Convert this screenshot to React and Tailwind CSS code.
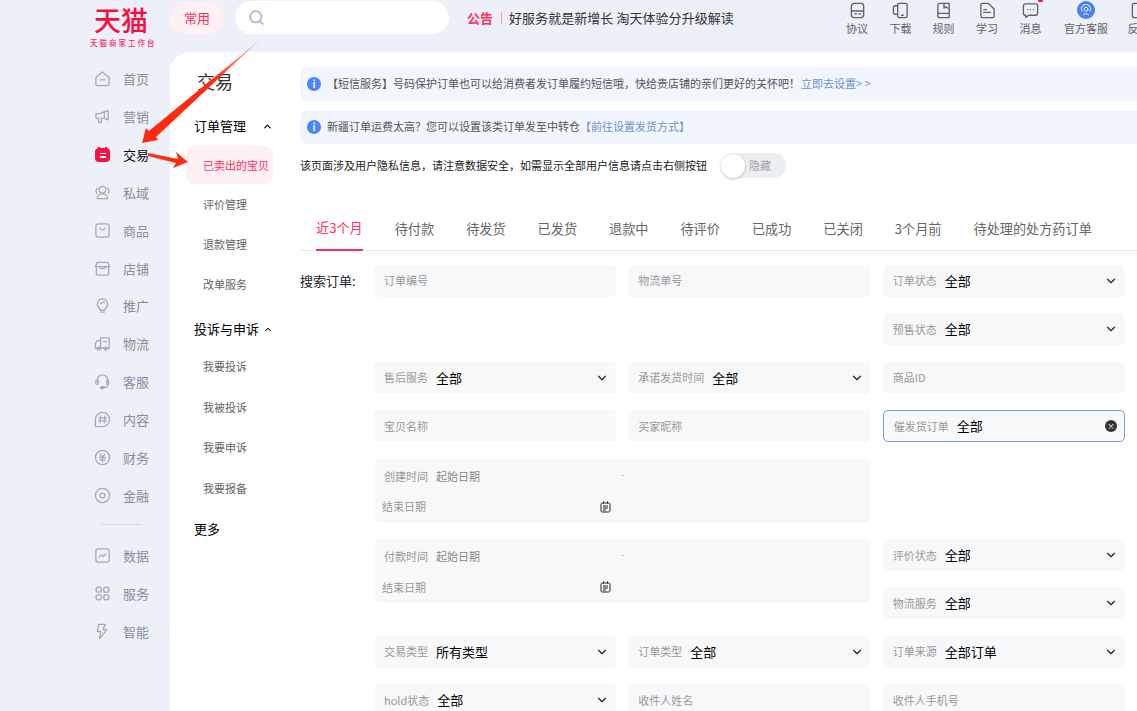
import React from 'react'
import { ChevronDown, ChevronUp, Search } from 'lucide-react'

const Ico = ({ children, size = 18, className = '' }) => (
  <svg width={size} height={size} viewBox="0 0 18 18" fill="none" stroke="currentColor" strokeWidth="1.4" strokeLinecap="round" strokeLinejoin="round" className={className}>
    {children}
  </svg>
)

const navTop = [
  { name: '首页', icon: <><path d="M2 8l7-6 7 6v7a1.5 1.5 0 0 1-1.5 1.5h-11A1.5 1.5 0 0 1 2 15z" /><path d="M6.5 10.5h5" /></> },
  { name: '营销', icon: <><path d="M2 6h4l9-3.500v10L11 11H7.500l.5 4.500H5L4.500 11H3.500A1.500 1.500 0 0 1 2 9.500z" /><path d="M11 4v7" /></> },
  { name: '交易', active: true },
  { name: '私域', icon: <><circle cx="9" cy="6" r="3.500" /><path d="M3.500 15.500c0-3 2.500-5 5.500-5s5.500 2 5.500 5z" /><path d="M3.500 4.500C2 6 2 8.500 3 10M14.500 4.500C16 6 16 8.500 15 10" /></> },
  { name: '商品', icon: <><rect x="2" y="2" width="14" height="14" rx="2.500" /><path d="M6.500 6.500c.5 2.500 4.500 2.500 5 0" /></> },
  { name: '店铺', icon: <><path d="M3.500 2.500h11l2 4.500H1.500z" /><path d="M2.500 7v7a2 2 0 0 0 2 2h9a2 2 0 0 0 2-2V7" /><path d="M6 8c1 1.500 5 1.500 6 0" /></> },
  { name: '推广', icon: <><path d="M9 2a5.500 5.500 0 0 0-3 10l.5 2h5l.5-2A5.500 5.500 0 0 0 9 2z" /><path d="M7 16h4" /><path d="M7 7l4-2" /></> },
  { name: '物流', icon: <><path d="M7 3h9v11H7z" /><path d="M7 6H3.500L1.500 9v5H7" /><circle cx="5" cy="14.500" r="1.500" /><circle cx="12.500" cy="14.500" r="1.500" /><path d="M10 7h3.500" /></> },
  { name: '客服', icon: <><path d="M3.500 9V7.500a5.500 5.500 0 0 1 11 0V9" /><rect x="2" y="7.500" width="2.500" height="4.500" rx="1" /><rect x="13.500" y="7.500" width="2" height="4.500" rx="1" /><path d="M14.500 12c0 2-2 3.500-4.500 3.500" /><rect x="7" y="14.500" width="3.500" height="2" rx="1" fill="currentColor" /></> },
  { name: '内容', icon: <><path d="M9 1.500a7.500 7.500 0 1 1 0 15H1.500V9A7.500 7.500 0 0 1 9 1.500z" /><path d="M7 5.500l-.5 7M11.500 5.500l-.5 7M5 7.500h8M5 10.500h8" /></> },
  { name: '财务', icon: <><circle cx="9" cy="9" r="7.500" /><path d="M6.500 5.500L9 8.500l2.500-3M6 9h6M6 11.500h6M9 8.500V14" /></> },
  { name: '金融', icon: <><circle cx="9" cy="9" r="7.500" /><circle cx="9" cy="9" r="2.500" /></> },
]

const navBottom = [
  { name: '数据', icon: <><rect x="2" y="2" width="14" height="14" rx="2.500" /><path d="M5.500 10.500l2.500-2 2 1.500 2.500-2.500" /></> },
  { name: '服务', icon: <><circle cx="5" cy="5" r="2.800" /><circle cx="13" cy="5" r="2.800" /><circle cx="5" cy="13" r="2.800" /><circle cx="13" cy="13" r="2.800" /></> },
  { name: '智能', icon: <><path d="M9 1.500H5L3.500 9H7l-1 7.500L13.500 7H9.500l2.500-5.500z" /></> },
]

function NavItem({ item }) {
  return (
    <div className={`flex items-center h-[37.850px] pl-[11px] ${item.active ? 'text-black' : 'text-[#878ea3]'}`}>
      <div className="w-[17px] h-[17px] flex items-center justify-center text-[#a5abbe]">
        {item.active ? (
          <div className="relative w-[15px] h-[14px] mt-[1px] rounded-[4px] bg-[#ff0f3f] flex flex-col items-center justify-center gap-[2px]">
            <div className="absolute top-[-1.500px] left-[3px] w-[2px] h-[3px] bg-[#ff0f3f]" />
            <div className="absolute top-[-1.500px] right-[3px] w-[2px] h-[3px] bg-[#ff0f3f]" />
            <div className="w-[6px] h-[1.500px] bg-white" />
            <div className="w-[6px] h-[1.500px] bg-white" />
          </div>
        ) : (
          <Ico size={17}>{item.icon}</Ico>
        )}
      </div>
      <span className="ml-[12px] text-[13px] leading-none">{item.name}</span>
    </div>
  )
}

function SubItem({ label, active, h = 'h-[40.500px]' }) {
  return (
    <div className={`flex items-center pl-[17px] ${h} text-[11px] ${active ? 'bg-[#fff0f3] rounded-lg text-[#ff2d5c]' : 'text-[#666]'}`}>
      {label}
    </div>
  )
}

function TopIcon({ label, w, children, badge }) {
  return (
    <div className="flex flex-col items-center text-[#5f6368] relative" style={{ width: w }}>
      <div className="h-[18px] flex items-center">
        {children}
      </div>
      {badge && <div className="absolute top-[-2px] left-[29px] w-[5px] h-[3px] rounded-full bg-[#ff0f3f]" />}
      <span className="text-[11px] leading-[18px] whitespace-nowrap">{label}</span>
    </div>
  )
}

function Field({ label, value, select, focused, className = '' }) {
  return (
    <div className={`h-[32px] rounded-[5px] bg-[#f7f8fa] flex items-center pl-[10px] pr-[7px] ${focused ? 'border border-[#7d9bd8] pl-[9px]' : ''} ${className}`}>
      <span className="text-[11px] text-[#999] whitespace-nowrap">{label}</span>
      {value && <span className="ml-[8px] text-[13px] text-black whitespace-nowrap">{value}</span>}
      {select && <ChevronDown size={14} strokeWidth={2} className="ml-auto text-[#222]" />}
      {focused && (
        <div className="ml-auto w-[12px] h-[12px] rounded-full bg-[#333] flex items-center justify-center text-white text-[8px] leading-none">×</div>
      )}
    </div>
  )
}

function DateField({ label }) {
  return (
    <div className="col-span-2 h-[64px] rounded-[5px] bg-[#f7f8fa] relative text-[11px] text-[#999]">
      <div className="flex items-center h-[35px] pl-[10px]">
        <span>{label}</span>
        <span className="ml-[8px] text-[#888]">起始日期</span>
        <span className="ml-[141px] mb-[6px] text-[#bbb] text-[10px]">-</span>
      </div>
      <div className="flex items-center h-[26px] pl-[8px] w-[237px]">
        <span>结束日期</span>
        <svg width="11" height="12" viewBox="0 0 11 12" fill="none" stroke="#222" strokeWidth="1" className="ml-auto">
          <rect x="1" y="2" width="9" height="9" rx="1.500" />
          <path d="M3.500.500v2M7.500.500v2M3 5h5M3 7h5M3 9h3" />
        </svg>
      </div>
    </div>
  )
}

const tabs = ['近3个月', '待付款', '待发货', '已发货', '退款中', '待评价', '已成功', '已关闭', '3个月前', '待处理的处方药订单']

export default function App() {
  return (
    <div className="w-[1137px] h-[711px] overflow-hidden bg-[#edf0f8] relative font-['Noto_Sans_CJK_SC','Liberation_Sans',sans-serif]">
      {/* header */}
      <div className="h-[52px] flex">
        <div className="w-[170px] pl-[89px] flex flex-col items-start">
          <div className="ml-[5px] mt-[4px] text-[27px] leading-[32px] font-medium text-[#ff0a3c]">天猫</div>
          <div className="ml-[1px] mt-[2px] text-[7.500px] leading-[9px] font-medium text-[#ff2d5c] tracking-[2px] whitespace-nowrap">天猫商家工作台</div>
        </div>
        <div className="w-[54px] h-[32px] mt-[2px] rounded-full bg-[#fff0f3] text-[#ff2d5c] text-[13px] flex items-center justify-center">常用</div>
        <div className="w-[214px] h-[33px] mt-[1px] ml-[11px] rounded-full bg-white flex items-center pl-[13px]">
          <Search size={17} strokeWidth={2.500} className="text-[#a9b8d8]" />
        </div>
        <div className="ml-[18px] h-[36px] flex items-center text-[13px] whitespace-nowrap">
          <span className="font-bold text-[#ff2d5c]">公告</span>
          <span className="mx-[7.500px] w-px h-[12px] bg-[#f5a0b0]" />
          <span className="text-[#333] tracking-[0.050px]">好服务就是新增长 淘天体验分升级解读</span>
        </div>
        <div className="ml-auto flex items-start pt-[1px] mr-[-20px]">
          <TopIcon label="协议" w={44}>
            <Ico size={17}><rect x="2.500" y="1.500" width="13" height="15" rx="3" /><path d="M2.500 9.500h13M6 12.500h2M10.500 12.500h2" /></Ico>
          </TopIcon>
          <TopIcon label="下载" w={43}>
            <Ico size={17}><rect x="6" y="1.500" width="10" height="15" rx="1.500" /><path d="M6 4H3a1.500 1.500 0 0 0-1.500 1.500v6A1.500 1.500 0 0 0 3 13h3M10 14h2" /></Ico>
          </TopIcon>
          <TopIcon label="规则" w={43}>
            <Ico size={17}><path d="M3 3.500a2 2 0 0 1 2-2h10v15H5a2 2 0 0 1-2-2z" /><path d="M3 12h12M9.500 1.500v5l2-1.500 2 1.500" /></Ico>
          </TopIcon>
          <TopIcon label="学习" w={44}>
            <Ico size={17}><path d="M2 3a1.500 1.500 0 0 1 1.500-1.500H10l6 6v7.500a1.500 1.500 0 0 1-1.500 1.500h-11A1.500 1.500 0 0 1 2 15z" /><path d="M5 8h3M5 11h7" /></Ico>
          </TopIcon>
          <TopIcon label="消息" w={43} badge>
            <Ico size={17}><path d="M3.500 2h11A2 2 0 0 1 16.500 4v8a2 2 0 0 1-2 2H7l-3 2.500V14A2 2 0 0 1 1.500 12V4a2 2 0 0 1 2-2z" /><path d="M6 8h.1M9 8h.1M12 8h.1" /></Ico>
          </TopIcon>
          <TopIcon label="官方客服" w={68}>
            <div className="w-[18px] h-[18px] rounded-full bg-[#4a7ff7] flex items-center justify-center text-white">
              <Ico size={12}><circle cx="9" cy="8" r="3" /><path d="M3 11a7 7 0 1 1 12 0M5 16c1-2 7-2 8 0" /></Ico>
            </div>
          </TopIcon>
          <TopIcon label="反馈" w={37}>
            <Ico size={17}><rect x="2.500" y="1.500" width="13" height="15" rx="2" /></Ico>
          </TopIcon>
        </div>
      </div>

      <div className="flex h-[659px]">
        {/* left rail */}
        <div className="w-[170px] pl-[82px] pt-[8px]">
          <div className="border-l border-[#eaeef6] h-full">
            {navTop.map((item) => <NavItem key={item.name} item={item} />)}
            <div className="ml-[18px] mt-[10px] mb-[11.500px] w-[41px] h-px bg-[#d9dbe0]" />
            {navBottom.map((item) => <NavItem key={item.name} item={item} />)}
          </div>
        </div>

        {/* main panel */}
        <div className="flex-1 bg-white rounded-tl-[20px] flex overflow-hidden">
          {/* sub menu */}
          <div className="w-[130px] shrink-0 pl-[16px] pr-[27px]">
            <div className="pl-[11px] pt-[16px] text-[18px] leading-[26px] text-[#333]">交易</div>
            <div className="flex items-center pl-[8px] mt-[21px] h-[22px] text-[13px] text-black">
              订单管理
              <ChevronUp size={11} strokeWidth={2.500} className="ml-[16px]" />
            </div>
            <div className="mt-[9px]">
              <SubItem label="已卖出的宝贝" active h="h-[38px]" />
              <SubItem label="评价管理" h="h-[39.500px]" />
              <SubItem label="退款管理" />
              <SubItem label="改单服务" />
            </div>
            <div className="flex items-center pl-[8px] mt-[13.500px] h-[22px] text-[13px] text-black whitespace-nowrap">
              投诉与申诉
              <ChevronUp size={11} strokeWidth={2.500} className="ml-[4px]" />
            </div>
            <div className="mt-[6px]">
              <SubItem label="我要投诉" />
              <SubItem label="我被投诉" />
              <SubItem label="我要申诉" />
              <SubItem label="我要报备" />
            </div>
            <div className="pl-[8px] mt-[10px] h-[22px] flex items-center text-[13px] text-black">更多</div>
          </div>

          {/* content */}
          <div className="flex-1 pt-[15px] min-w-0">
            <div className="h-[34px] rounded-l-lg bg-[#f1f5fe] flex items-center pl-[7px] text-[11px] text-[#555] whitespace-nowrap">
              <div className="w-[14px] h-[14px] rounded-full bg-[#4a86f7] text-white text-[10px] font-bold leading-none flex items-center justify-center">i</div>
              <span className="ml-[6px] mb-[2px]">【短信服务】号码保护订单也可以给消费者发订单履约短信哦，快给贵店铺的亲们更好的关怀吧！</span>
              <span className="ml-[1px] mb-[2px] text-[#6f8fd0]">立即去设置&gt; &gt;</span>
            </div>
            <div className="mt-[9px] h-[34px] rounded-l-lg bg-[#f1f5fe] flex items-center pl-[7px] text-[11px] text-[#555] whitespace-nowrap">
              <div className="w-[14px] h-[14px] rounded-full bg-[#4a86f7] text-white text-[10px] font-bold leading-none flex items-center justify-center">i</div>
              <span className="ml-[6px] mb-[2px]">新疆订单运费太高？您可以设置该类订单发至中转仓</span>
              <span className="mb-[2px] text-[#6f8fd0]">【前往设置发货方式】</span>
            </div>
            <div className="mt-[9px] h-[25px] flex items-center text-[11px] text-[#222] whitespace-nowrap">
              该页面涉及用户隐私信息，请注意数据安全，如需显示全部用户信息请点击右侧按钮
              <div className="ml-[14px] w-[65px] h-[25px] rounded-full bg-[#eceef2] flex items-center">
                <div className="w-[24px] h-[24px] rounded-full bg-white shadow-[0_1px_3px_rgba(0,0,0,0.25)]" />
                <span className="ml-[4px] text-[#a3a3a3]">隐藏</span>
              </div>
            </div>

            <div className="mt-[35px] h-[38px] pl-[16px] flex border-b border-[#e8e8e8] gap-[32px] text-[13.150px] text-[#666] whitespace-nowrap">
              {tabs.map((t, i) => (
                <div key={t} className={`h-[38px] pb-[6px] flex items-center ${i === 0 ? 'text-[#ff2d5c] border-b-2 border-[#ff2d5c]' : ''}`}>{t}</div>
              ))}
            </div>

            {/* search form */}
            <div className="mt-[13.500px] flex">
              <div className="w-[74px] h-[32px] shrink-0 flex items-center text-[13px] text-[#222] whitespace-nowrap">搜索订单:</div>
              <div className="w-[751px] shrink-0 flex flex-col gap-[16.500px]">
                <div className="grid grid-cols-3 gap-x-[12px]">
                  <Field label="订单编号" />
                  <Field label="物流单号" />
                  <Field label="订单状态" value="全部" select />
                </div>
                <div className="grid grid-cols-3 gap-x-[12px]">
                  <Field label="预售状态" value="全部" select className="col-start-3" />
                </div>
                <div className="grid grid-cols-3 gap-x-[12px]">
                  <Field label="售后服务" value="全部" select />
                  <Field label="承诺发货时间" value="全部" select />
                  <Field label="商品ID" />
                </div>
                <div className="grid grid-cols-3 gap-x-[12px]">
                  <Field label="宝贝名称" />
                  <Field label="买家昵称" />
                  <Field label="催发货订单" value="全部" focused />
                </div>
                <div className="grid grid-cols-3 gap-x-[12px]">
                  <DateField label="创建时间" />
                </div>
                <div className="grid grid-cols-3 gap-x-[12px]">
                  <DateField label="付款时间" />
                  <div className="flex flex-col gap-[16px]">
                    <Field label="评价状态" value="全部" select />
                    <Field label="物流服务" value="全部" select />
                  </div>
                </div>
                <div className="grid grid-cols-3 gap-x-[12px]">
                  <Field label="交易类型" value="所有类型" select />
                  <Field label="订单类型" value="全部" select />
                  <Field label="订单来源" value="全部订单" select />
                </div>
                <div className="grid grid-cols-3 gap-x-[12px]">
                  <Field label="hold状态" value="全部" select />
                  <Field label="收件人姓名" />
                  <Field label="收件人手机号" />
                </div>
              </div>
            </div>
          </div>
        </div>
      </div>

      {/* red annotation arrows */}
      <svg width="1137" height="711" viewBox="0 0 1137 711" className="absolute left-0 top-0 pointer-events-none">
        <defs>
          <linearGradient id="a1" gradientUnits="userSpaceOnUse" x1="262" y1="38" x2="142" y2="143">
            <stop offset="0" stopColor="#ff3b1f" stopOpacity="0.15" />
            <stop offset="0.4" stopColor="#ff2a10" />
            <stop offset="1" stopColor="#ff2a10" />
          </linearGradient>
        </defs>
        <polygon points="262,38 156,137 158,140 142,143 146,128 149,131" fill="url(#a1)" />
        <polygon points="148,153 178,159 176,152 188,162 173,168 176,163 148,156" fill="#ff2a10" />
      </svg>
    </div>
  )
}
